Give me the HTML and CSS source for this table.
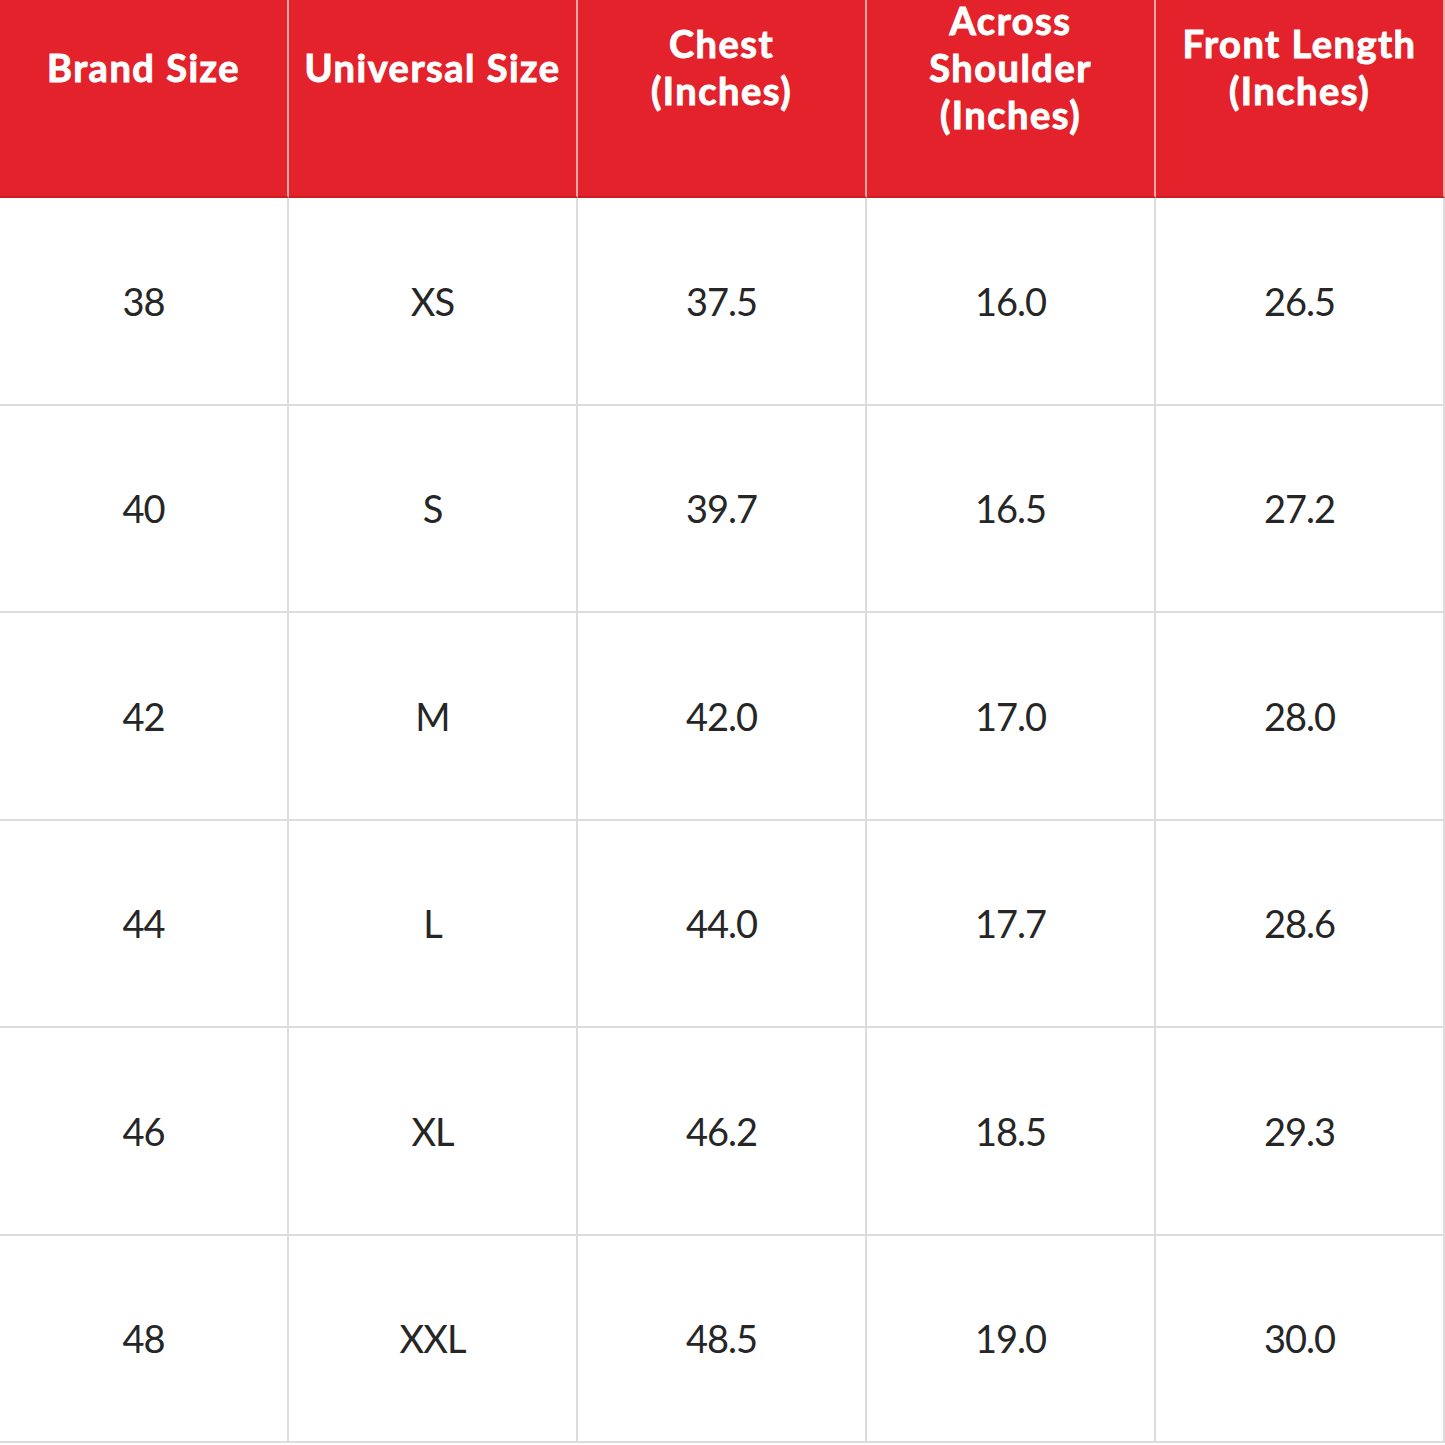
FILE: index.html
```html
<!DOCTYPE html>
<html>
<head>
<meta charset="utf-8">
<link rel="stylesheet" href="styles.css">
</head>
<body>
<div class="chart">
  <div class="hd">Brand Size</div>
  <div class="hd">Universal Size</div>
  <div class="hd">Chest<br>(Inches)</div>
  <div class="hd">Across<br>Shoulder<br>(Inches)</div>
  <div class="hd">Front Length<br>(Inches)</div>

  <div class="cell">38</div><div class="cell">XS</div><div class="cell">37.5</div><div class="cell">16.0</div><div class="cell">26.5</div>
  <div class="cell">40</div><div class="cell">S</div><div class="cell">39.7</div><div class="cell">16.5</div><div class="cell">27.2</div>
  <div class="cell">42</div><div class="cell">M</div><div class="cell">42.0</div><div class="cell">17.0</div><div class="cell">28.0</div>
  <div class="cell">44</div><div class="cell">L</div><div class="cell">44.0</div><div class="cell">17.7</div><div class="cell">28.6</div>
  <div class="cell">46</div><div class="cell">XL</div><div class="cell">46.2</div><div class="cell">18.5</div><div class="cell">29.3</div>
  <div class="cell">48</div><div class="cell">XXL</div><div class="cell">48.5</div><div class="cell">19.0</div><div class="cell">30.0</div>
</div>
</body>
</html>
```
FILE: styles.css
```css
html, body {
  margin: 0;
  padding: 0;
  background: #ffffff;
}
body {
  width: 1445px;
  height: 1445px;
  overflow: hidden;
}
.chart {
  display: grid;
  grid-template-columns: repeat(5, 289px);
  grid-template-rows: 198px repeat(6, 207.5px);
  width: 1445px;
}
.hd {
  background: #e4222b;
  color: #ffffff;
  font-family: Lato, "Open Sans", sans-serif;
  font-weight: 700;
  font-size: 38px;
  letter-spacing: 1.5px;
  line-height: 47px;
  text-align: center;
  display: flex;
  align-items: center;
  justify-content: center;
  padding-top: 2px;
  padding-bottom: 64px;
  box-sizing: border-box;
  border-right: 2px solid #f3a6a8;
  border-bottom: 2px solid #c81e26;
  -webkit-text-stroke: 1px #ffffff;
  text-shadow: 0 0 1px rgba(120, 0, 0, 0.6);
  overflow: visible;
}
.hd:last-of-type {
  border-right: none;
}
.cell {
  display: flex;
  align-items: center;
  justify-content: center;
  box-sizing: border-box;
  border-right: 2px solid #dcdcdc;
  border-bottom: 2px solid #dcdcdc;
  font-family: Lato, "Open Sans", sans-serif;
  font-weight: 400;
  font-size: 38px;
  letter-spacing: -1px;
  color: #262626;
}
```
